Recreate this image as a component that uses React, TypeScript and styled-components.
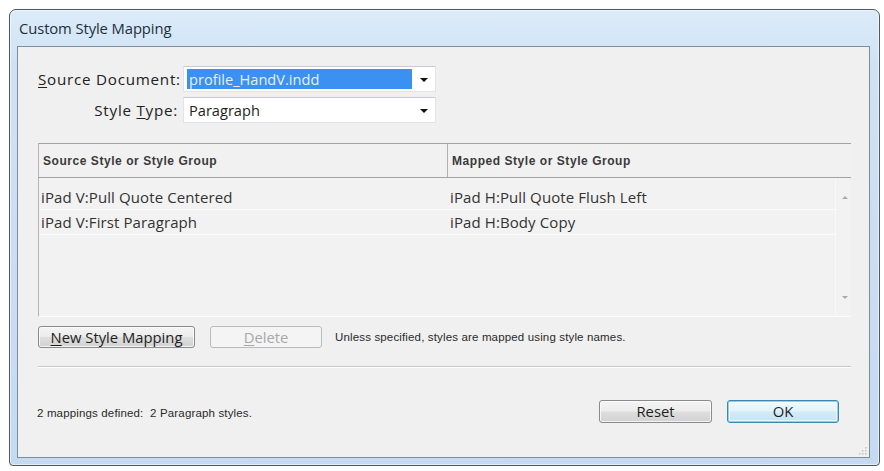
import React from "react";
import styled, { createGlobalStyle } from "styled-components";

const GlobalStyle = createGlobalStyle`
  html, body {
    margin: 0;
    padding: 0;
    background: #ffffff;
  }
  * { box-sizing: border-box; }
`;

const uiFont = `"Open Sans", "Noto Sans", "DejaVu Sans", sans-serif`;
const smallFont = `"Liberation Sans", "DejaVu Sans", sans-serif`;

const Page = styled.div`
  padding: 9px 0 0 9px;
  width: 884px;
  height: 471px;
`;

const Window = styled.div`
  width: 871px;
  height: 457px;
  border: 1px solid #4d5863;
  border-radius: 7px 7px 4px 4px;
  background: linear-gradient(180deg, #dcebf9 0%, #cfe2f5 12%, #c4daf1 100%);
  box-shadow: inset 0 0 0 1px rgba(255, 255, 255, 0.55);
  padding: 0 9px 7px 7px;
  display: flex;
  flex-direction: column;
`;

const TitleBar = styled.div`
  height: 36px;
  display: flex;
  align-items: center;
  padding: 0 0 1px 2px;
  font-family: ${uiFont};
  font-size: 14.8px;
  color: #1d2f3d;
  letter-spacing: -0.1px;
`;

const Client = styled.div`
  flex: 1;
  border: 1px solid #7f8d9a;
  background: #f0f0f0;
  padding: 19px 18px 0 20px;
  display: flex;
  flex-direction: column;
  position: relative;
  font-family: ${uiFont};
  color: #1e1e1e;
`;

const FieldGrid = styled.div`
  display: grid;
  grid-template-columns: 140px 253px;
  column-gap: 5px;
  row-gap: 5px;
  align-items: center;
`;

const FieldLabel = styled.label`
  text-align: right;
  font-size: 15.2px;
  letter-spacing: 0.75px;
  white-space: nowrap;
  color: #222222;
`;

const Key = styled.span`
  text-decoration: underline;
  text-underline-offset: 2px;
`;

const Combo = styled.div`
  height: 26px;
  background: #ffffff;
  border: 1px solid #e2e3ea;
  border-top-color: #c9cbd2;
  display: flex;
  align-items: center;
  padding: 2px 0 2px 3px;
`;

const ComboValue = styled.div<{ $selected?: boolean }>`
  flex: 1;
  height: 100%;
  display: flex;
  align-items: center;
  padding-left: 2px;
  font-size: 14.6px;
  white-space: nowrap;
  background: ${(p) => (p.$selected ? "#3a91f2" : "transparent")};
  color: ${(p) => (p.$selected ? "#e4f0ff" : "#1e1e1e")};
`;

const ComboArrow = styled.div`
  width: 23px;
  display: flex;
  justify-content: center;
  align-items: center;
  &::after {
    content: "";
    border-left: 4px solid transparent;
    border-right: 4px solid transparent;
    border-top: 4px solid #111111;
    margin-top: 1px;
  }
`;

const MappingTable = styled.div`
  margin-top: 20px;
  width: 813px;
  display: flex;
  flex-direction: column;
`;

const HeaderRow = styled.div`
  display: flex;
  height: 35px;
  border-top: 1px solid #a3a3a3;
  border-bottom: 1px solid #a3a3a3;
  border-left: 1px solid #b4b4b4;
  background: #f1f1f1;
`;

const HeaderCell = styled.div<{ $width?: number }>`
  ${(p) => (p.$width ? `width: ${p.$width}px;` : "flex: 1;")}
  display: flex;
  align-items: center;
  padding-left: 4px;
  font-family: ${smallFont};
  font-weight: bold;
  font-size: 12px;
  letter-spacing: 0.55px;
  color: #3a3a3a;
  border-right: ${(p) => (p.$width ? "1px solid #b0b0b0" : "none")};
`;

const ListBody = styled.div`
  height: 139px;
  display: flex;
  border-left: 1px solid #b4b4b4;
  border-bottom: 1px solid #fbfbfb;
  background: #f2f2f2;
`;

const Rows = styled.div`
  flex: 1;
  padding-top: 7px;
  display: flex;
  flex-direction: column;
`;

const Row = styled.div`
  display: flex;
  height: 25px;
  border-bottom: 1px solid #fbfbfb;
  font-size: 15px;
  letter-spacing: 0.1px;
  color: #333333;
`;

const Cell = styled.div<{ $width?: number }>`
  ${(p) => (p.$width ? `width: ${p.$width}px;` : "flex: 1;")}
  display: flex;
  align-items: center;
  padding-left: 2px;
  white-space: nowrap;
`;

const ScrollTrack = styled.div`
  width: 16px;
  border-left: 1px solid #f8f8f8;
  display: flex;
  flex-direction: column;
  justify-content: space-between;
  align-items: center;
  padding: 18px 0 17px 2px;
`;

const ScrollArrow = styled.div<{ $down?: boolean }>`
  width: 0;
  height: 0;
  border-left: 3px solid transparent;
  border-right: 3px solid transparent;
  ${(p) =>
    p.$down
      ? "border-top: 3px solid #a9a9a9;"
      : "border-bottom: 3px solid #a9a9a9;"}
`;

const ActionRow = styled.div`
  margin-top: 9px;
  height: 22px;
  display: flex;
  align-items: center;
`;

const Button = styled.button<{ $width: number; $default?: boolean }>`
  width: ${(p) => p.$width}px;
  height: 100%;
  padding: 0;
  border-radius: 3px;
  font-family: ${uiFont};
  font-size: 14.8px;
  line-height: 1;
  color: #1e1e1e;
  border: 1px solid ${(p) => (p.$default ? "#3d87ad" : "#8a8a8a")};
  background: ${(p) =>
    p.$default
      ? "linear-gradient(180deg, #f1f9fd 0%, #e4f3fb 48%, #d2ebf7 52%, #c6e4f4 100%)"
      : "linear-gradient(180deg, #f4f4f4 0%, #ececec 48%, #dedede 52%, #d2d2d2 100%)"};
  box-shadow: ${(p) =>
    p.$default
      ? "inset 0 0 0 1px #8fd0ec, inset 0 0 0 2px rgba(255,255,255,0.6)"
      : "inset 0 0 0 1px rgba(255,255,255,0.75)"};
  &:disabled {
    color: #a8a8a8;
    border-color: #b8bcbf;
    background: #f4f4f4;
    box-shadow: none;
  }
`;

const Note = styled.span`
  margin-left: 13px;
  font-family: ${smallFont};
  font-size: 11.5px;
  letter-spacing: 0.15px;
  color: #2a2a2a;
  white-space: nowrap;
`;

const Divider = styled.div`
  margin-top: 18px;
  width: 813px;
  height: 2px;
  border-top: 1px solid #c8c8c8;
  border-bottom: 1px solid #ffffff;
`;

const Footer = styled.div`
  margin-top: 32px;
  height: 23px;
  width: 813px;
  padding-right: 12px;
  display: flex;
  align-items: center;
`;

const Status = styled.span`
  flex: 1;
  margin-left: -1px;
  padding-top: 2px;
  font-family: ${smallFont};
  font-size: 11.5px;
  letter-spacing: 0.15px;
  color: #2a2a2a;
  white-space: nowrap;
`;

const ButtonGroup = styled.div`
  height: 100%;
  display: flex;
  gap: 15px;
`;

const ResizeGrip = styled.svg`
  position: absolute;
  right: 2px;
  bottom: 2px;
`;

const columns = 409;

const mappings = [
  { source: "iPad V:Pull Quote Centered", target: "iPad H:Pull Quote Flush Left" },
  { source: "iPad V:First Paragraph", target: "iPad H:Body Copy" },
];

export default function App() {
  return (
    <>
      <GlobalStyle />
      <Page>
        <Window>
          <TitleBar>Custom Style Mapping</TitleBar>
          <Client>
            <FieldGrid>
              <FieldLabel>
                <Key>S</Key>ource Document:
              </FieldLabel>
              <Combo>
                <ComboValue $selected>profile_HandV.indd</ComboValue>
                <ComboArrow />
              </Combo>
              <FieldLabel>
                Style <Key>T</Key>ype:
              </FieldLabel>
              <Combo>
                <ComboValue>Paragraph</ComboValue>
                <ComboArrow />
              </Combo>
            </FieldGrid>

            <MappingTable>
              <HeaderRow>
                <HeaderCell $width={columns}>Source Style or Style Group</HeaderCell>
                <HeaderCell>Mapped Style or Style Group</HeaderCell>
              </HeaderRow>
              <ListBody>
                <Rows>
                  {mappings.map((m) => (
                    <Row key={m.source}>
                      <Cell $width={columns}>{m.source}</Cell>
                      <Cell>{m.target}</Cell>
                    </Row>
                  ))}
                </Rows>
                <ScrollTrack>
                  <ScrollArrow />
                  <ScrollArrow $down />
                </ScrollTrack>
              </ListBody>
            </MappingTable>

            <ActionRow>
              <Button $width={157}>
                <Key>N</Key>ew Style Mapping
              </Button>
              <Button $width={112} disabled style={{ marginLeft: 15 }}>
                <Key>D</Key>elete
              </Button>
              <Note>Unless specified, styles are mapped using style names.</Note>
            </ActionRow>

            <Divider />

            <Footer>
              <Status>2 mappings defined:&nbsp; 2 Paragraph styles.</Status>
              <ButtonGroup>
                <Button $width={113}>Reset</Button>
                <Button $width={112} $default>
                  OK
                </Button>
              </ButtonGroup>
            </Footer>

            <ResizeGrip width="10" height="10" viewBox="0 0 10 10">
              {[
                [8, 2],
                [8, 5],
                [5, 5],
                [8, 8],
                [5, 8],
                [2, 8],
              ].map(([x, y]) => (
                <rect key={`${x}-${y}`} x={x} y={y} width="1.5" height="1.5" fill="#c4c4c4" />
              ))}
            </ResizeGrip>
          </Client>
        </Window>
      </Page>
    </>
  );
}
